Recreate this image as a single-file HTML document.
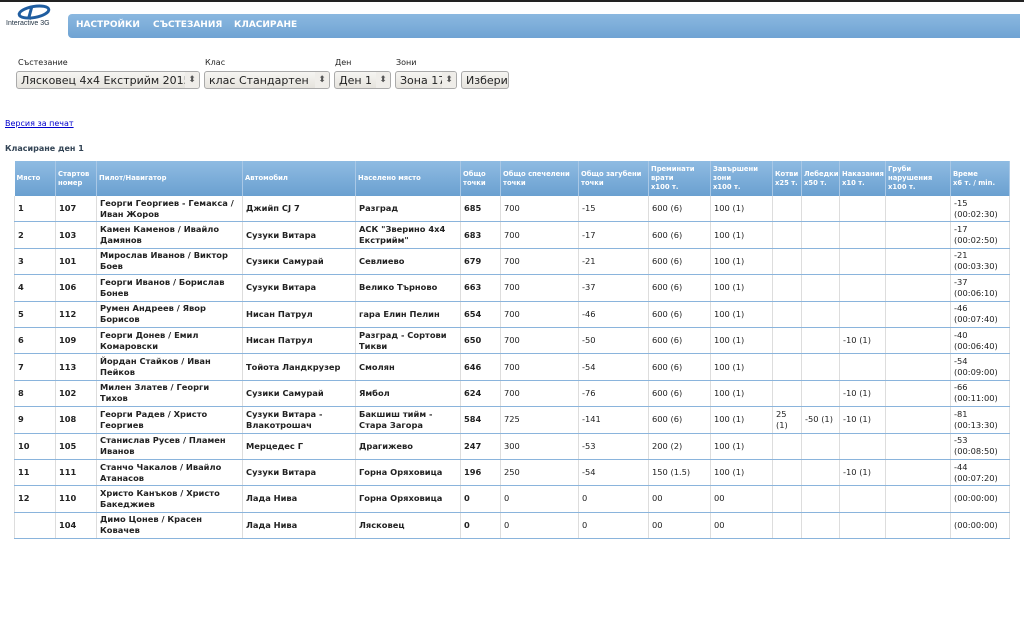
<!DOCTYPE html>
<html><head><meta charset="utf-8"><style>
body{margin:0;width:1024px;height:640px;background:#fff;font-family:"DejaVu Sans","Liberation Sans",sans-serif;position:relative;overflow:hidden}
.top{position:absolute;left:0;top:0;width:1024px;height:2px;background:#222}
.logo{position:absolute;left:4px;top:2px;width:60px;height:28px}
.logo .t{position:absolute;left:2px;top:18px;font-size:7px;color:#234;font-family:"Liberation Sans",sans-serif}
.nav{position:absolute;left:68px;top:14px;width:952px;height:24px;background:linear-gradient(#8bb8e0,#6fa3d3);border-radius:4px 0 0 4px}
.nav span{position:absolute;top:6px;color:#fff;font-weight:bold;font-size:9px}
.lbl{position:absolute;top:58px;font-size:8px;color:#222}
.sel{position:absolute;top:71px;height:18px;border:1px solid #aaa;border-radius:3px;background:linear-gradient(#f6f5f2,#e6e3dd);font-size:11px;line-height:17px;padding-left:4px;box-sizing:border-box;color:#222;white-space:nowrap;overflow:hidden}
.sel i{position:absolute;right:0;top:0;width:14px;text-align:center;font-style:normal;font-size:9px;color:#555;background:#efede9}
a{position:absolute;left:5px;top:119px;font-size:8px;color:#00c}
h4{position:absolute;left:5px;top:144px;margin:0;font-size:8px;color:#345;font-weight:bold}
table{position:absolute;left:14px;top:161px;border-collapse:collapse;table-layout:fixed;width:995px;font-size:8.3px}
th{background:linear-gradient(#8fbbe2,#6aa0d0);color:#fff;font-weight:bold;text-align:left;vertical-align:middle;height:35px;padding:0 2px;font-size:6.8px;line-height:9px;border-right:1px solid #a9c8e6}
td{height:25.4px;padding:0 3px;border-bottom:1px solid #8ab4dc;border-right:1px solid #ddd;color:#222;line-height:11px;vertical-align:middle}
td:first-child{border-left:1px solid #ddd}
td.b{font-weight:bold}
</style></head><body>
<div class="top"></div>
<div class="logo"><svg width="60" height="20" viewBox="0 0 60 20"><ellipse cx="30" cy="10" rx="15" ry="5.5" fill="none" stroke="#1f5da0" stroke-width="3" transform="rotate(-10 30 10)"/><path d="M28 4 L25 15" stroke="#1f5da0" stroke-width="3"/></svg><div class="t">Interactive 3G</div></div>
<div class="nav"><span style="left:8px">НАСТРОЙКИ</span><span style="left:85px">СЪСТЕЗАНИЯ</span><span style="left:166px">КЛАСИРАНЕ</span></div>
<div class="lbl" style="left:18px">Състезание</div>
<div class="lbl" style="left:205px">Клас</div>
<div class="lbl" style="left:335px">Ден</div>
<div class="lbl" style="left:396px">Зони</div>
<div class="sel" style="left:16px;width:184px">Лясковец 4x4 Екстрийм 2015<i>⬍</i></div>
<div class="sel" style="left:204px;width:126px">клас Стандартен<i>⬍</i></div>
<div class="sel" style="left:334px;width:57px">Ден 1<i>⬍</i></div>
<div class="sel" style="left:395px;width:62px">Зона 17<i>⬍</i></div>
<div class="sel" style="left:461px;width:48px">Избери</div>
<a href="#">Версия за печат</a>
<h4>Класиране ден 1</h4>
<table>
<colgroup><col style="width:41px"><col style="width:41px"><col style="width:146px"><col style="width:113px"><col style="width:105px"><col style="width:40px"><col style="width:78px"><col style="width:70px"><col style="width:62px"><col style="width:62px"><col style="width:29px"><col style="width:38px"><col style="width:46px"><col style="width:65px"><col style="width:59px"></colgroup>
<tr><th>Място</th><th>Стартов номер</th><th>Пилот/Навигатор</th><th>Автомобил</th><th>Населено място</th><th>Общо точки</th><th>Общо спечелени точки</th><th>Общо загубени точки</th><th>Преминати врати<br>x100 т.</th><th>Завършени зони<br>x100 т.</th><th>Котви x25 т.</th><th>Лебедки x50 т.</th><th>Наказания x10 т.</th><th>Груби нарушения x100 т.</th><th>Време<br>x6 т. / min.</th></tr>
<tr><td class="b">1</td><td class="b">107</td><td class="b">Георги Георгиев - Гемакса / Иван Жоров</td><td class="b">Джийп CJ 7</td><td class="b">Разград</td><td class="b">685</td><td>700</td><td>-15</td><td>600 (6)</td><td>100 (1)</td><td></td><td></td><td></td><td></td><td>-15<br>(00:02:30)</td></tr>
<tr><td class="b">2</td><td class="b">103</td><td class="b">Камен Каменов / Ивайло Дамянов</td><td class="b">Сузуки Витара</td><td class="b">АСК "Зверино 4x4 Екстрийм"</td><td class="b">683</td><td>700</td><td>-17</td><td>600 (6)</td><td>100 (1)</td><td></td><td></td><td></td><td></td><td>-17<br>(00:02:50)</td></tr>
<tr><td class="b">3</td><td class="b">101</td><td class="b">Мирослав Иванов / Виктор Боев</td><td class="b">Сузики Самурай</td><td class="b">Севлиево</td><td class="b">679</td><td>700</td><td>-21</td><td>600 (6)</td><td>100 (1)</td><td></td><td></td><td></td><td></td><td>-21<br>(00:03:30)</td></tr>
<tr><td class="b">4</td><td class="b">106</td><td class="b">Георги Иванов / Борислав Бонев</td><td class="b">Сузуки Витара</td><td class="b">Велико Търново</td><td class="b">663</td><td>700</td><td>-37</td><td>600 (6)</td><td>100 (1)</td><td></td><td></td><td></td><td></td><td>-37<br>(00:06:10)</td></tr>
<tr><td class="b">5</td><td class="b">112</td><td class="b">Румен Андреев / Явор Борисов</td><td class="b">Нисан Патрул</td><td class="b">гара Елин Пелин</td><td class="b">654</td><td>700</td><td>-46</td><td>600 (6)</td><td>100 (1)</td><td></td><td></td><td></td><td></td><td>-46<br>(00:07:40)</td></tr>
<tr><td class="b">6</td><td class="b">109</td><td class="b">Георги Донев / Емил Комаровски</td><td class="b">Нисан Патрул</td><td class="b">Разград - Сортови Тикви</td><td class="b">650</td><td>700</td><td>-50</td><td>600 (6)</td><td>100 (1)</td><td></td><td></td><td>-10 (1)</td><td></td><td>-40<br>(00:06:40)</td></tr>
<tr><td class="b">7</td><td class="b">113</td><td class="b">Йордан Стайков / Иван Пейков</td><td class="b">Тойота Ландкрузер</td><td class="b">Смолян</td><td class="b">646</td><td>700</td><td>-54</td><td>600 (6)</td><td>100 (1)</td><td></td><td></td><td></td><td></td><td>-54<br>(00:09:00)</td></tr>
<tr><td class="b">8</td><td class="b">102</td><td class="b">Милен Златев / Георги Тихов</td><td class="b">Сузики Самурай</td><td class="b">Ямбол</td><td class="b">624</td><td>700</td><td>-76</td><td>600 (6)</td><td>100 (1)</td><td></td><td></td><td>-10 (1)</td><td></td><td>-66<br>(00:11:00)</td></tr>
<tr><td class="b">9</td><td class="b">108</td><td class="b">Георги Радев / Христо Георгиев</td><td class="b">Сузуки Витара - Влакотрошач</td><td class="b">Бакшиш тийм - Стара Загора</td><td class="b">584</td><td>725</td><td>-141</td><td>600 (6)</td><td>100 (1)</td><td>25 (1)</td><td>-50 (1)</td><td>-10 (1)</td><td></td><td>-81<br>(00:13:30)</td></tr>
<tr><td class="b">10</td><td class="b">105</td><td class="b">Станислав Русев / Пламен Иванов</td><td class="b">Мерцедес Г</td><td class="b">Драгижево</td><td class="b">247</td><td>300</td><td>-53</td><td>200 (2)</td><td>100 (1)</td><td></td><td></td><td></td><td></td><td>-53<br>(00:08:50)</td></tr>
<tr><td class="b">11</td><td class="b">111</td><td class="b">Станчо Чакалов / Ивайло Атанасов</td><td class="b">Сузуки Витара</td><td class="b">Горна Оряховица</td><td class="b">196</td><td>250</td><td>-54</td><td>150 (1.5)</td><td>100 (1)</td><td></td><td></td><td>-10 (1)</td><td></td><td>-44<br>(00:07:20)</td></tr>
<tr><td class="b">12</td><td class="b">110</td><td class="b">Христо Канъков / Христо Бакеджиев</td><td class="b">Лада Нива</td><td class="b">Горна Оряховица</td><td class="b">0</td><td>0</td><td>0</td><td>00</td><td>00</td><td></td><td></td><td></td><td></td><td>(00:00:00)</td></tr>
<tr><td class="b"></td><td class="b">104</td><td class="b">Димо Цонев / Красен Ковачев</td><td class="b">Лада Нива</td><td class="b">Лясковец</td><td class="b">0</td><td>0</td><td>0</td><td>00</td><td>00</td><td></td><td></td><td></td><td></td><td>(00:00:00)</td></tr>
</table>
</body></html>
